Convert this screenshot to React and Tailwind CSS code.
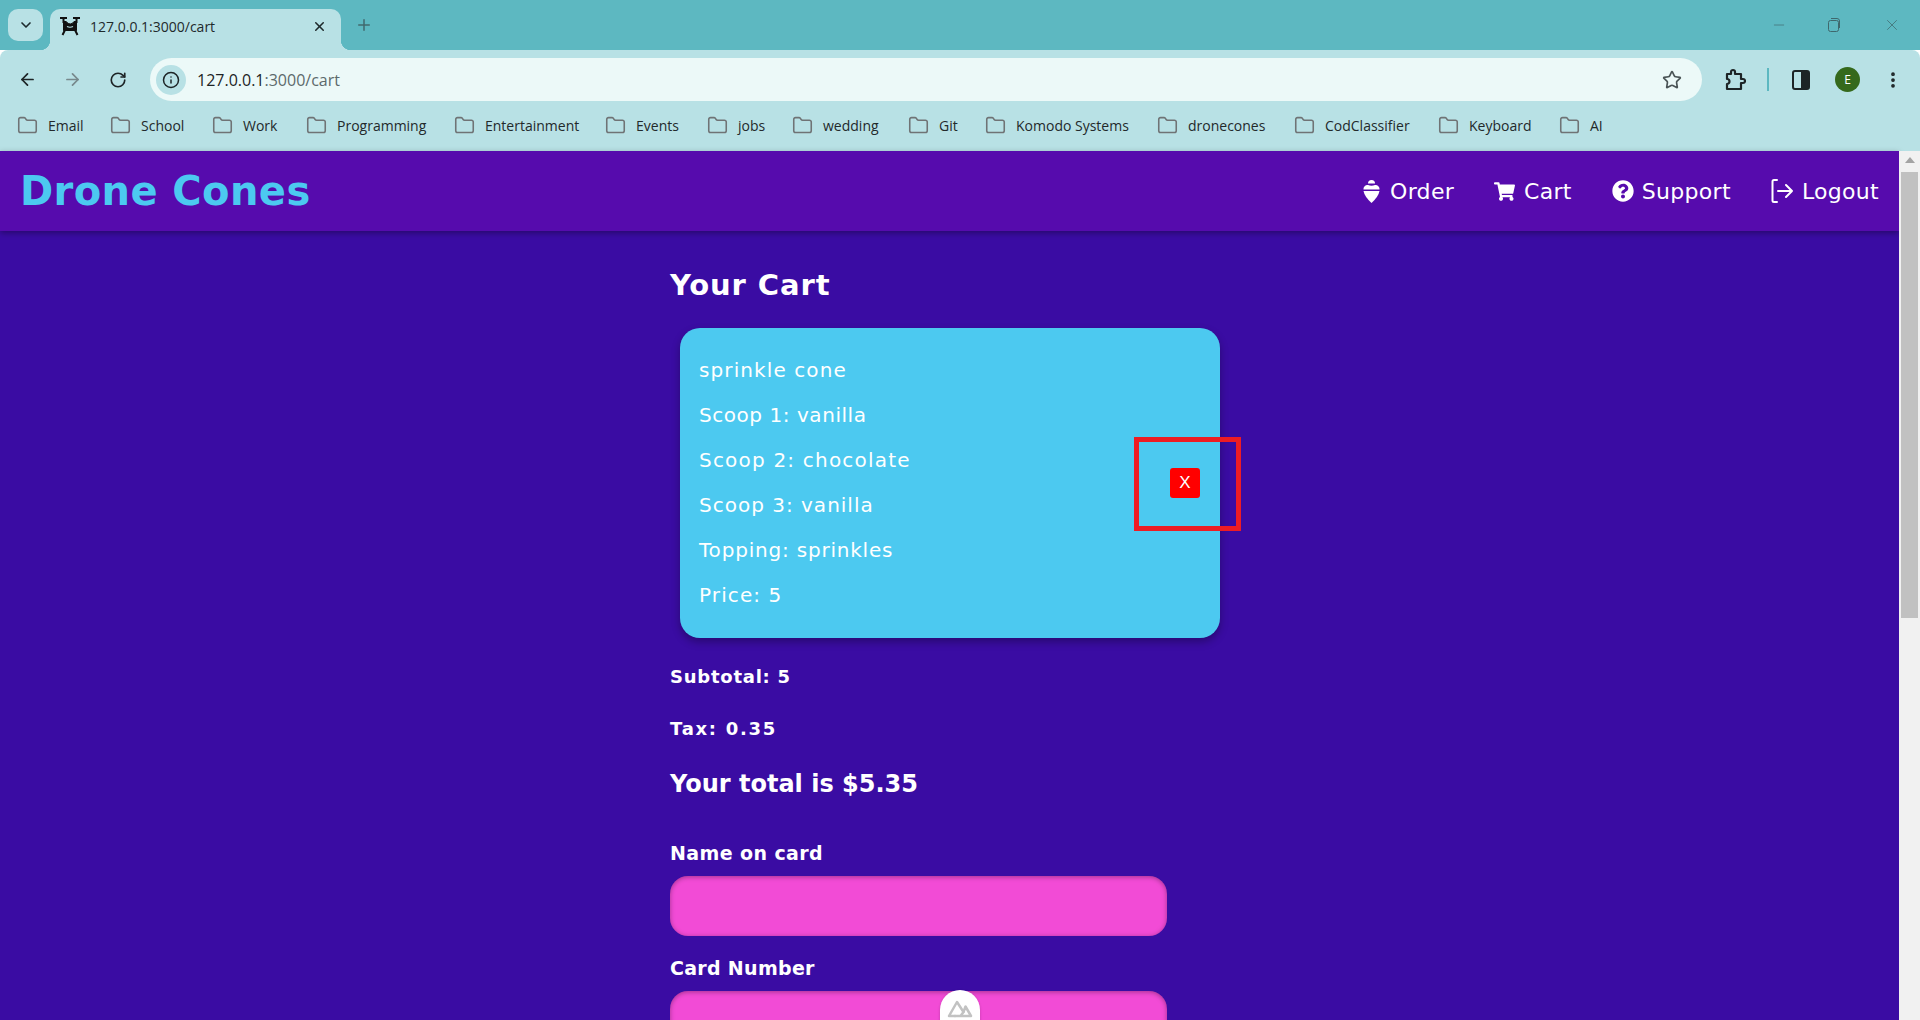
import React from "react";
import { ArrowLeft, ArrowRight, RotateCw, Info, Star, Folder, X, Plus, ChevronDown, Minus, MoreVertical } from "lucide-react";
import { FaShoppingCart, FaQuestionCircle } from "react-icons/fa";

const bookmarks = [
  ["Email", "w-[93px]"],
  ["School", "w-[102px]"],
  ["Work", "w-[94px]"],
  ["Programming", "w-[148px]"],
  ["Entertainment", "w-[151px]"],
  ["Events", "w-[102px]"],
  ["jobs", "w-[85px]"],
  ["wedding", "w-[116px]"],
  ["Git", "w-[77px]"],
  ["Komodo Systems", "w-[172px]"],
  ["dronecones", "w-[137px]"],
  ["CodClassifier", "w-[144px]"],
  ["Keyboard", "w-[121px]"],
  ["AI", "w-[50px]"],
];

const lines = [
  ["sprinkle cone", "tracking-[1.1px]"],
  ["Scoop 1: vanilla", "tracking-[0.55px]"],
  ["Scoop 2: chocolate", "tracking-[1.2px]"],
  ["Scoop 3: vanilla", "tracking-[1px]"],
  ["Topping: sprinkles", "tracking-[0.8px]"],
  ["Price: 5", "tracking-[1.1px]"],
];

function Favicon() {
  return (
    <svg width="20" height="20" viewBox="0 0 20 20" fill="none" stroke="#111" strokeWidth="2">
      <path d="M0 2h7M13 2h7M3.500 2v5M16.500 2v5" />
      <path d="M3.500 5.500h2.500q4.500 5 8 0h2.500v9H3.500z" fill="#111" strokeWidth="1" />
      <path d="M5 14l-2.500 5M15 14l2.500 5" />
      <path d="M7 10.500q3 1.500 6 0" stroke="#b8e1e5" strokeWidth="1.200" />
    </svg>
  );
}

function Cone() {
  return (
    <svg width="17" height="24" viewBox="0 0 17 24" fill="#fff">
      <path d="M5 4.500a3.500 3.500 0 0 1 7 0z" />
      <path d="M.5 10.500a4 4 0 0 1 4.500-4.500q3.500 1.500 7 0a4 4 0 0 1 4.500 4.500z" />
      <path d="M.5 12h16q-1 5.500-8 12q-7-6.500-8-12z" />
    </svg>
  );
}

function Exit() {
  return (
    <svg width="22" height="26" viewBox="0 0 22 26" fill="none" stroke="#fff" strokeWidth="2" strokeLinecap="round" strokeLinejoin="round">
      <path d="M6 2H3a1.500 1.500 0 0 0-1.500 1.500v19A1.500 1.500 0 0 0 3 24h3" />
      <path d="M7 13h14M15 7l6 6-6 6" />
    </svg>
  );
}

function NavItem({ icon, label, cls }) {
  return (
    <a className={"flex items-center " + cls}>
      {icon}
      <span className="text-[22px] font-normal tracking-[0.3px] text-white">{label}</span>
    </a>
  );
}

function Field({ label, cls }) {
  return (
    <div className="flex flex-col">
      <label className={"text-[19px] font-bold leading-[24px] text-white " + cls}>{label}</label>
      <div className="mt-[11px] h-[60px] w-[497px] shrink-0 rounded-[18px] bg-[#f24bd6] shadow-[inset_0_1px_5px_rgba(0,0,0,0.35)]" />
    </div>
  );
}

export default function App() {
  return (
    <div className="relative flex h-[1020px] w-[1920px] flex-col overflow-hidden font-['DejaVu_Sans',sans-serif]">
      {/* Tab strip */}
      <div className="flex h-[50px] shrink-0 items-end bg-[#5db8c1] pl-[8px]">
        <div className="mb-[9px] flex h-[32px] w-[35px] items-center justify-center rounded-[10px] bg-[#b8e1e5]">
          <ChevronDown size={16} strokeWidth={2.5} className="text-[#1d2b2e]" />
        </div>
        <div className="relative ml-[7px] flex h-[41px] w-[291px] items-center rounded-t-[10px] bg-[#b8e1e5] pb-[7px] pl-[10px] pr-[14px]">
          <Favicon />
          <span className="ml-[10px] font-['Open_Sans',sans-serif] text-[14px] text-[#1f2a2c]">127.0.0.1:3000/cart</span>
          <X size={15} strokeWidth={2.5} className="ml-auto text-[#1f2a2c]" />
          <div className="absolute bottom-0 left-[-10px] h-[10px] w-[10px] bg-[radial-gradient(circle_at_0_0,transparent_10px,#b8e1e5_10.5px)]" />
          <div className="absolute bottom-0 right-[-10px] h-[10px] w-[10px] bg-[radial-gradient(circle_at_100%_0,transparent_10px,#b8e1e5_10.5px)]" />
        </div>
        <Plus size={18} strokeWidth={2} className="mb-[16px] ml-[14px] text-[#41696e]" />
        <div className="mb-[16px] ml-auto flex items-center text-[#3f686d]">
          <Minus size={16} strokeWidth={1} className="mr-[40px]" />
          <svg width="14" height="16" viewBox="0 0 14 16" fill="none" stroke="currentColor" className="mr-[42px]">
            <rect x="1.5" y="3.5" width="10" height="11" rx="2" />
            <path d="M4 1.5h6a2.500 2.500 0 0 1 2.500 2.500v7" />
          </svg>
          <X size={18} strokeWidth={1} className="mr-[19px]" />
        </div>
      </div>

      {/* Toolbar */}
      <div className="flex h-[51px] shrink-0 items-center rounded-t-[8px] bg-[#b8e1e5] pl-[18px] pt-[8px]">
        <ArrowLeft size={19} strokeWidth={2.2} className="text-[#1d2426]" />
        <ArrowRight size={19} strokeWidth={2.2} className="ml-[26px] text-[#77898c]" />
        <RotateCw size={18} strokeWidth={2.2} className="ml-[27px] text-[#1d2426]" />
        <div className="ml-[23px] flex h-[43px] w-[1552px] items-center rounded-full bg-[#ecf9f8] pl-[6px] pr-[20px]">
          <div className="flex h-[30px] w-[30px] items-center justify-center rounded-full bg-[#b8e1e5]">
            <Info size={18} strokeWidth={2} className="text-[#1d2426]" />
          </div>
          <span className="ml-[11px] font-['Open_Sans',sans-serif] text-[16px] text-[#1d2426]">
            127.0.0.1<span className="text-[#5c6a6c]">:3000/cart</span>
          </span>
          <Star size={20} strokeWidth={2} className="ml-auto text-[#4a5456]" />
        </div>
        <svg width="22" height="24" viewBox="0 0 22 24" fill="none" stroke="#1d2426" strokeWidth="2.200" className="ml-[22px]">
          <path d="M3 6h4V4a2 2 0 0 1 4 0v2h6v5h2a2 2 0 0 1 0 4h-2v6H3v-5a2.500 2.500 0 0 0 0-5z" strokeLinejoin="round" />
        </svg>
        <div className="ml-[21px] h-[23px] w-[2px] bg-[#5db8c1]" />
        <svg width="18" height="20" viewBox="0 0 18 20" className="ml-[23px]">
          <rect x="1" y="1" width="16" height="18" rx="2" fill="none" stroke="#1d2426" strokeWidth="2" />
          <rect x="9" y="1" width="8" height="18" fill="#1d2426" />
        </svg>
        <div className="ml-[25px] flex h-[25px] w-[25px] items-center justify-center rounded-full bg-[#35691c] font-['Open_Sans',sans-serif] text-[12px] text-white">E</div>
        <MoreVertical size={20} strokeWidth={2.5} className="ml-[23px] text-[#1d2426]" />
      </div>

      {/* Bookmarks */}
      <div className="flex h-[50px] shrink-0 items-center bg-[#b8e1e5] pb-[2px] pl-[17px]">
        {bookmarks.map(([name, w]) => (
          <div key={name} className={"flex items-center " + w}>
            <Folder size={21} strokeWidth={1.8} className="text-[#6f7375]" />
            <span className="ml-[10px] font-['Open_Sans',sans-serif] text-[14px] text-[#23292b]">{name}</span>
          </div>
        ))}
      </div>

      {/* Page */}
      <div className="flex min-h-0 flex-1">
        <div className="flex min-w-0 flex-1 flex-col bg-[#3a0ca3]">
          <header className="flex h-[80px] shrink-0 items-center justify-between bg-[#560bad] pl-[20px] pr-[20px] shadow-[0_2px_6px_rgba(0,0,0,0.35)]">
            <h1 className="text-[40px] font-bold tracking-[0.4px] text-[#4cc9f0]">Drone Cones</h1>
            <nav className="flex items-center">
              <NavItem icon={<Cone />} label="Order" cls="gap-[10px]" />
              <NavItem icon={<FaShoppingCart size={21} className="text-white" />} label="Cart" cls="ml-[40px] gap-[9px]" />
              <NavItem icon={<FaQuestionCircle size={22} className="text-white" />} label="Support" cls="ml-[40px] gap-[8px]" />
              <NavItem icon={<Exit />} label="Logout" cls="ml-[40px] gap-[9px]" />
            </nav>
          </header>

          <main className="mx-auto flex w-[559px] flex-col pt-[36px]">
            <h2 className="text-[29px] font-bold leading-[36px] tracking-[0.9px] text-white">Your Cart</h2>
            <section className="relative ml-[10px] mt-[25px] flex h-[310px] w-[540px] shrink-0 items-center justify-between rounded-[20px] bg-[#4cc9f0] pl-[19px] pr-[20px] shadow-[0_4px_8px_rgba(0,0,0,0.3)]">
              <div className="mb-[2px] flex flex-col gap-[21px]">
                {lines.map(([t, c]) => (
                  <p key={t} className={"text-[20px] leading-[24px] text-white " + c}>{t}</p>
                ))}
              </div>
              <button className="flex h-[30px] w-[30px] items-center justify-center rounded-[3px] bg-[#ff0000] font-['Liberation_Sans',sans-serif] text-[17px] text-white">X</button>
              <div className="absolute left-[454px] top-[109px] h-[94px] w-[107px] border-[5px] border-[#ed1c24]" />
            </section>
            <p className="mt-[27px] text-[18px] font-bold leading-[24px] tracking-[0.75px] text-white">Subtotal: 5</p>
            <p className="mt-[28px] text-[18px] font-bold leading-[24px] tracking-[1.7px] text-white">Tax: 0.35</p>
            <p className="mt-[28px] text-[24px] font-bold leading-[30px] text-white">Your total is $5.35</p>
            <div className="mt-[42px] flex flex-col gap-[20px]">
              <Field label="Name on card" cls="tracking-[0.4px]" />
              <Field label="Card Number" cls="tracking-[0.3px]" />
            </div>
          </main>
        </div>

        {/* Scrollbar */}
        <div className="flex w-[21px] shrink-0 flex-col items-center bg-[#f1f1f1]">
          <div className="mt-[6px] h-0 w-0 border-x-[5px] border-b-[6px] border-x-transparent border-b-[#a3a3a3]" />
          <div className="mt-[9px] h-[446px] w-[17px] bg-[#c1c1c1]" />
        </div>
      </div>

      {/* Nuxt devtools */}
      <div className="absolute left-[940px] top-[990px] flex h-[60px] w-[40px] justify-center rounded-full bg-white pt-[10px] shadow-[0_1px_3px_rgba(0,0,0,0.2)]">
        <svg width="26" height="18" viewBox="0 0 26 18" fill="none" stroke="#c2c2c2" strokeWidth="2.500" strokeLinejoin="round" strokeLinecap="round">
          <path d="M8 16H2L10 2l6.500 10" />
          <path d="M8 16h16L18.500 6.500l-2 5.500-3 4" />
        </svg>
      </div>
    </div>
  );
}
